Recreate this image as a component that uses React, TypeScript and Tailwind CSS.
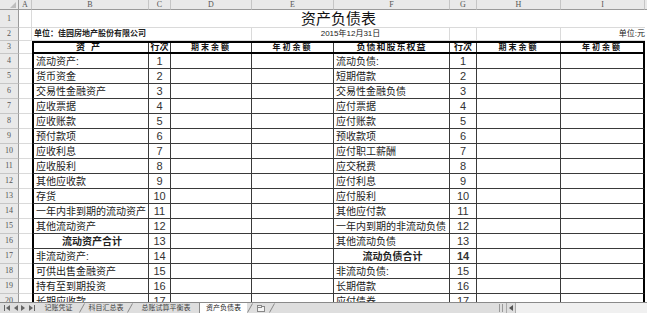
import React from "react";

type Row = { l: string; ln: number; r: string; rn: number; lb?: boolean; rb?: boolean };

const rows: Row[] = [
  { l: "流动资产:", ln: 1, r: "流动负债:", rn: 1 },
  { l: "货币资金", ln: 2, r: "短期借款", rn: 2 },
  { l: "交易性金融资产", ln: 3, r: "交易性金融负债", rn: 3 },
  { l: "应收票据", ln: 4, r: "应付票据", rn: 4 },
  { l: "应收账款", ln: 5, r: "应付账款", rn: 5 },
  { l: "预付款项", ln: 6, r: "预收款项", rn: 6 },
  { l: "应收利息", ln: 7, r: "应付职工薪酬", rn: 7 },
  { l: "应收股利", ln: 8, r: "应交税费", rn: 8 },
  { l: "其他应收款", ln: 9, r: "应付利息", rn: 9 },
  { l: "存货", ln: 10, r: "应付股利", rn: 10 },
  { l: "一年内非到期的流动资产", ln: 11, r: "其他应付款", rn: 11 },
  { l: "其他流动资产", ln: 12, r: "一年内到期的非流动负债", rn: 12 },
  { l: "流动资产合计", ln: 13, r: "其他流动负债", rn: 13, lb: true },
  { l: "非流动资产:", ln: 14, r: "流动负债合计", rn: 14, rb: true },
  { l: "可供出售金融资产", ln: 15, r: "非流动负债:", rn: 15 },
  { l: "持有至到期投资", ln: 16, r: "长期借款", rn: 16 },
  { l: "长期应收款", ln: 17, r: "应付债券", rn: 17 },
];

const cols = [
  { k: "A", w: "w-[13px]" },
  { k: "B", w: "w-[117px]" },
  { k: "C", w: "w-[22px]" },
  { k: "D", w: "w-[81px]" },
  { k: "E", w: "w-[82px]" },
  { k: "F", w: "w-[116px]" },
  { k: "G", w: "w-[27px]" },
  { k: "H", w: "w-[84px]" },
  { k: "I", w: "w-[84px]" },
];

function RowHead({ n }: { n: number }) {
  return (
    <div className="flex w-[19px] shrink-0 items-center justify-center border-r border-b border-r-[#9a9a9a] border-b-[#c6c6c6] bg-[#e9e9e9] font-['Liberation_Serif',serif] text-[8px] text-[#555]">
      {n}
    </div>
  );
}

function DataRow({ n, row }: { n: number; row: Row }) {
  const line = "border-r border-b border-[#3a3a3a]";
  return (
    <div className="flex h-[15px]">
      <RowHead n={n} />
      <div className="w-[13px] shrink-0 border-b border-[#dadada]" />
      <div
        className={`flex w-[117px] shrink-0 items-center overflow-hidden whitespace-nowrap border-l-2 border-l-black pl-[2px] text-[10px] text-[#222] ${line} ${
          row.lb ? "justify-center font-bold" : ""
        }`}
      >
        {row.l}
      </div>
      <div className={`flex w-[22px] shrink-0 items-center justify-center text-[11px] text-[#333] ${line}`}>{row.ln}</div>
      <div className={`w-[81px] shrink-0 ${line}`} />
      <div className={`w-[82px] shrink-0 ${line}`} />
      <div
        className={`flex w-[116px] shrink-0 items-center overflow-hidden whitespace-nowrap pl-[2px] text-[10px] text-[#222] ${line} ${
          row.rb ? "justify-center font-bold" : ""
        }`}
      >
        {row.r}
      </div>
      <div
        className={`flex w-[27px] shrink-0 items-center justify-center text-[11px] text-[#333] ${line} ${
          row.rb ? "font-bold" : ""
        }`}
      >
        {row.rn}
      </div>
      <div className={`w-[84px] shrink-0 ${line}`} />
      <div className="w-[84px] shrink-0 border-b border-r-2 border-[#3a3a3a] border-r-black" />
    </div>
  );
}

function Sep() {
  return (
    <svg width="6" height="10" className="shrink-0">
      <line x1="0.5" y1="9.5" x2="5.5" y2="0.5" stroke="#8a8a8a" strokeWidth="1" />
    </svg>
  );
}

export default function App() {
  return (
    <div className="flex h-[313px] w-[647px] flex-col overflow-hidden bg-white font-['Liberation_Sans','Noto_Sans_CJK_SC',sans-serif]">
      <div className="h-[302px] shrink-0 overflow-hidden">
        {/* column letters */}
        <div className="flex h-[10px]">
          <div className="relative w-[19px] shrink-0 border-r border-b border-[#9a9a9a] bg-[#e9e9e9]">
            <svg width="6" height="6" className="absolute right-[2px] bottom-[1px]">
              <polygon points="6,0 6,6 0,6" fill="#bdbdbd" />
            </svg>
          </div>
          {cols.map((c) => (
            <div
              key={c.k}
              className={`${c.w} flex shrink-0 items-center justify-center border-r border-b border-r-[#c6c6c6] border-b-[#9a9a9a] bg-[#e9e9e9] font-['Liberation_Serif',serif] text-[8px] text-[#555]`}
            >
              {c.k}
            </div>
          ))}
          <div className="flex-1 border-b border-[#9a9a9a] bg-[#e9e9e9]" />
        </div>

        {/* row 1 title */}
        <div className="flex h-[18px]">
          <RowHead n={1} />
          <div className="w-[13px] shrink-0 border-r border-b border-[#dadada]" />
          <div className="flex w-[613px] shrink-0 items-center justify-center border-b border-[#dadada] pt-[2px] text-[15px] text-[#111]">
            资产负债表
          </div>
        </div>

        {/* row 2 */}
        <div className="flex h-[13px]">
          <RowHead n={2} />
          <div className="w-[13px] shrink-0 border-r border-b border-[#dadada]" />
          <div className="flex w-[220px] shrink-0 items-center border-r border-b border-[#dadada] pl-[2px] text-[8px] font-bold text-[#222]">
            单位：佳园房地产股份有限公司
          </div>
          <div className="flex w-[198px] shrink-0 items-center justify-center border-r border-b border-[#dadada] text-[8px] text-[#222]">
            2015年12月31日
          </div>
          <div className="w-[27px] shrink-0 border-r border-b border-[#dadada]" />
          <div className="w-[84px] shrink-0 border-r border-b border-[#dadada]" />
          <div className="flex w-[84px] shrink-0 items-center justify-end border-b border-[#dadada] text-[8px] text-[#222]">
            单位:元
          </div>
        </div>

        {/* row 3 header */}
        <div className="flex h-[13px]">
          <RowHead n={3} />
          <div className="w-[13px] shrink-0 border-b border-[#dadada]" />
          <div className="flex flex-1 border-2 border-black text-[9px] font-bold text-[#111]">
            <div className="flex w-[115px] shrink-0 items-center justify-center border-r border-[#3a3a3a] tracking-[6px]">
              资产
            </div>
            <div className="flex w-[22px] shrink-0 items-center justify-center border-r border-[#3a3a3a]">行次</div>
            <div className="flex w-[81px] shrink-0 items-center justify-center border-r border-[#3a3a3a] text-[8px] tracking-[2px]">
              期末余额
            </div>
            <div className="flex w-[82px] shrink-0 items-center justify-center border-r border-[#3a3a3a] text-[8px] tracking-[2px]">
              年初余额
            </div>
            <div className="flex w-[116px] shrink-0 items-center justify-center border-r border-[#3a3a3a] tracking-[1px]">
              负债和股东权益
            </div>
            <div className="flex w-[27px] shrink-0 items-center justify-center border-r border-[#3a3a3a]">行次</div>
            <div className="flex w-[84px] shrink-0 items-center justify-center border-r border-[#3a3a3a] text-[8px] tracking-[2px]">
              期末余额
            </div>
            <div className="flex flex-1 items-center justify-center text-[8px] tracking-[2px]">年初余额</div>
          </div>
          <div className="w-[2px] shrink-0" />
        </div>

        {rows.map((r, i) => (
          <DataRow key={i} n={i + 4} row={r} />
        ))}
      </div>

      {/* sheet tabs */}
      <div className="flex h-[11px] shrink-0 items-stretch overflow-hidden whitespace-nowrap border-t border-[#8a8a8a] bg-[#dedede] text-[7px] leading-[10px] text-[#444]">
        <div className="flex w-[38px] shrink-0 items-center justify-around px-[2px] text-[#666]">
          <svg width="6" height="6">
            <rect x="0" y="0" width="1" height="6" fill="#666" />
            <polygon points="6,0 6,6 2,3" fill="#666" />
          </svg>
          <svg width="5" height="6">
            <polygon points="5,0 5,6 1,3" fill="#666" />
          </svg>
          <svg width="5" height="6">
            <polygon points="0,0 0,6 4,3" fill="#666" />
          </svg>
          <svg width="6" height="6">
            <polygon points="0,0 0,6 4,3" fill="#666" />
            <rect x="5" y="0" width="1" height="6" fill="#666" />
          </svg>
        </div>
        <div className="flex w-[41px] shrink-0 items-center justify-center">记账凭证</div>
        <Sep />
        <div className="flex w-[42px] shrink-0 items-center justify-center">科目汇总表</div>
        <Sep />
        <div className="flex w-[66px] shrink-0 items-center justify-center">总账试算平衡表</div>
        <div className="flex w-[48px] shrink-0 items-center justify-center border-l border-[#8a8a8a] bg-white text-[#222]">
          资产负债表
        </div>
        <Sep />
        <div className="flex w-[16px] shrink-0 items-center justify-center">
          <svg width="9" height="7">
            <rect x="0.5" y="1.5" width="7" height="5" fill="#f4f4f4" stroke="#888" />
            <rect x="0.5" y="0.5" width="4" height="2" fill="#f4f4f4" stroke="#888" />
          </svg>
        </div>
        <Sep />
        <div className="flex-1" />
        <div className="w-[4px] shrink-0 border-x border-[#999] my-[1px] mr-[3px]" />
        <div className="flex w-[9px] shrink-0 items-center justify-center border-l border-[#aaa]">
          <svg width="4" height="6">
            <polygon points="4,0 4,6 0,3" fill="#555" />
          </svg>
        </div>
        <div className="w-[132px] shrink-0 border-l border-[#aaa] bg-[#f0f0f0]" />
      </div>
    </div>
  );
}
